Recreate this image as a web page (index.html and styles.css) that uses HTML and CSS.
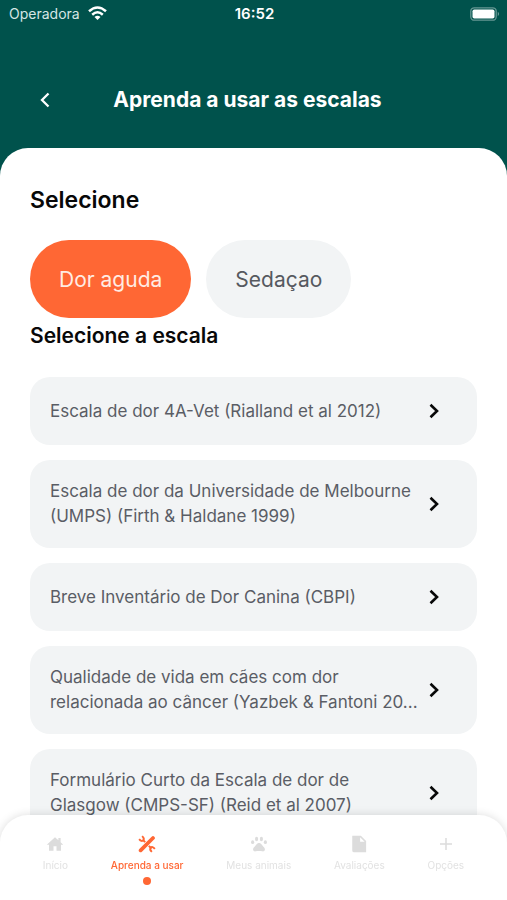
FILE: index.html
```html
<!DOCTYPE html>
<html lang="pt-BR">
<head>
<meta charset="utf-8">
<meta name="viewport" content="width=device-width, initial-scale=1">
<title>Aprenda a usar as escalas</title>
<link rel="stylesheet" href="styles.css">
</head>
<body>
<div class="status">
  <div class="carrier">
    <span>Operadora</span>
    <svg width="19" height="15" viewBox="0 0 19 15" fill="none" stroke="#fff" stroke-width="2.5"><path d="M1 5.300Q9.500-2.400 18 5.300M4.200 8.700Q9.500 3.900 14.800 8.700"/><path d="M6.500 11Q9.500 8.500 12.500 11L9.500 14Z" fill="#fff" stroke="none"/></svg>
  </div>
  <span class="clock">16:52</span>
  <div class="battery">
    <svg width="30" height="14" viewBox="0 0 30 14"><rect x=".8" y=".8" width="25.400" height="12.400" rx="3.500" fill="none" stroke="#fff" stroke-opacity=".4" stroke-width="1.300"/><rect x="2.500" y="2.500" width="22" height="9" rx="1.800" fill="#fff"/><path d="M27.800 4.800Q30 7 27.800 9.200Z" fill="#fff" opacity=".5"/></svg>
  </div>
</div>
<header class="header">
  <button class="back" aria-label="Voltar"><svg width="10" height="16" viewBox="0 0 10 16" fill="none" stroke="#fff" stroke-width="2.300"><path d="M8.500 1.500L2 8l6.500 6.500"/></svg></button>
  <h1>Aprenda a usar as escalas</h1>
</header>
<main class="sheet">
  <h2>Selecione</h2>
  <div class="pills">
    <button class="pill active">Dor aguda</button>
    <button class="pill">Sedaçao</button>
  </div>
  <h3>Selecione a escala</h3>
  <div class="list">
    <a class="card" href="#"><span>Escala de dor 4A-Vet (Rialland et al 2012)</span><svg class="chevron" viewBox="0 0 10 16"><path d="M1.500 1.700L8 8l-6.500 6.300"/></svg></a>
    <a class="card" href="#"><span>Escala de dor da Universidade de Melbourne (UMPS) (Firth &amp; Haldane 1999)</span><svg class="chevron" viewBox="0 0 10 16"><path d="M1.500 1.700L8 8l-6.500 6.300"/></svg></a>
    <a class="card" href="#"><span>Breve Inventário de Dor Canina (CBPI)</span><svg class="chevron" viewBox="0 0 10 16"><path d="M1.500 1.700L8 8l-6.500 6.300"/></svg></a>
    <a class="card" href="#"><span>Qualidade de vida em cães com dor relacionada ao câncer (Yazbek &amp; Fantoni 20...</span><svg class="chevron" viewBox="0 0 10 16"><path d="M1.500 1.700L8 8l-6.500 6.300"/></svg></a>
    <a class="card" href="#"><span>Formulário Curto da Escala de dor de Glasgow (CMPS-SF) (Reid et al 2007)</span><svg class="chevron" viewBox="0 0 10 16"><path d="M1.500 1.700L8 8l-6.500 6.300"/></svg></a>
  </div>
</main>
<nav class="tabs">
  <a class="tab" href="#"><svg viewBox="0 0 24 24"><path d="M10 21v-6h4v6h6v-8h3L19.500 9.800V4h-3v3L12 3 1 13h3v8z"/></svg>Início</a>
  <a class="tab current" href="#"><svg viewBox="0 0 24 24"><g fill="none" stroke="#ff6734"><path d="M3.500 20.500 20 4" stroke-width="5" stroke-linecap="round"/><path d="M6.500 6.500 9.500 9.500M14.500 14.500 18 18" stroke-width="2.800"/><path d="M5.500 1.500Q9 4.500 7 7T1.500 5.500M18.500 22.500Q15 19.500 17 17T22.500 18.500" stroke-width="2.600"/></g></svg>Aprenda a usar</a>
  <a class="tab" href="#"><svg viewBox="0 0 24 24"><ellipse cx="3.500" cy="9.500" rx="2.100" ry="2.500"/><ellipse cx="8.800" cy="5.300" rx="2.100" ry="2.900"/><ellipse cx="15.200" cy="5.300" rx="2.100" ry="2.900"/><ellipse cx="20.500" cy="9.500" rx="2.100" ry="2.500"/><path d="M17.300 14.900c-.9-1-1.600-1.900-2.500-2.900-.9-1.100-1.700-1.500-2.800-1.500s-1.900.4-2.800 1.500c-.9 1-1.600 1.900-2.500 2.900-1.300 1.300-2.900 2.700-2.600 4.700.4 2 1.900 2.500 3.500 2.200 1.500-.3 2.700-.5 4.400-.5s2.900.2 4.400.5c1.600.3 3.100-.2 3.500-2.200.3-2-1.300-3.400-2.600-4.700z"/></svg>Meus animais</a>
  <a class="tab" href="#"><svg viewBox="0 0 24 24"><path fill-rule="evenodd" d="M3 1h11.500L21.500 8V23H5.500Q3 23 3 20.500zM13.500 3V9H19.500z"/></svg>Avaliações</a>
  <a class="tab" href="#"><svg viewBox="0 0 24 24"><path d="M11 4h2v7h7v2h-7v7h-2v-7H4v-2h7z"/></svg>Opções</a>
</nav>
</body>
</html>
```

FILE: styles.css
```css
* { box-sizing: border-box; }
html { height: 100%; overflow: hidden; }
body {
  margin: 0;
  height: 100%;
  overflow: hidden;
  display: flex;
  flex-direction: column;
  background: #00524c;
  font-family: Inter, "Liberation Sans", sans-serif;
}
button { border: 0; font: inherit; cursor: pointer; }
a { text-decoration: none; }
h1, h2, h3 { margin: 0; font-weight: 600; }

.status {
  flex: none;
  display: grid;
  grid-template-columns: 1fr auto 1fr;
  align-items: center;
  height: 27px;
  padding: 0 7px 0 9px;
  color: #fff;
  font-size: 14px;
}
.carrier { display: flex; align-items: center; gap: 8px; color: #d5e6e4; }
.clock { font-size: 15px; font-weight: 600; }
.battery { display: flex; justify-content: flex-end; }

.header {
  flex: none;
  display: grid;
  grid-template-columns: 30px 1fr 30px;
  align-items: center;
  height: 121px;
  padding: 24px 42px 0 30px;
  color: #fff;
}
.header h1 { font-size: 21px; font-weight: 700; line-height: 28px; text-align: center; }
.back { display: flex; justify-content: center; padding: 8px 0; background: none; }

.sheet {
  flex: 1;
  min-height: 0;
  overflow: hidden;
  padding: 36px 30px 0;
  border-radius: 28px 28px 0 0;
  background: #fff;
  color: #080808;
}
.sheet h2 { font-size: 23px; line-height: 32px; }
.sheet h3 { margin-bottom: 23px; font-size: 21px; line-height: 36px; }
.pills { display: flex; gap: 15px; margin-top: 24px; }
.pill {
  height: 78px;
  padding: 0 29px;
  border-radius: 39px;
  background: #f2f4f5;
  color: #56595f;
  font-size: 21px;
}
.pill.active { background: #ff6734; color: #ffece3; }

.list { display: flex; flex-direction: column; gap: 15px; }
.card {
  display: flex;
  align-items: center;
  justify-content: space-between;
  min-height: 68px;
  padding: 19px 38px 19px 20px;
  border-radius: 20px;
  background: #f2f4f5;
  color: #5a5d65;
  font-size: 17px;
  line-height: 25px;
}
.card span { flex: 0 1 372px; }
.chevron { flex: none; width: 10px; height: 16px; fill: none; stroke: #080808; stroke-width: 2.6; }

.tabs {
  position: fixed;
  inset: auto 0 0;
  display: flex;
  justify-content: space-evenly;
  height: 85px;
  padding-top: 20px;
  border-radius: 28px 28px 0 0;
  background: #fff;
  box-shadow: 0 0 10px rgba(0, 0, 0, 0.14);
}
.tab {
  display: flex;
  flex-direction: column;
  align-items: center;
  gap: 5px;
  color: #e2e2e2;
  font-size: 10px;
  line-height: 14px;
}
.tab svg { width: 18px; height: 18px; fill: #dcdcdc; }
.tab.current { color: #ff6734; font-weight: 500; }
.tab.current::after {
  content: "";
  width: 8px;
  height: 8px;
  border-radius: 50%;
  background: #ff6734;
}
```
